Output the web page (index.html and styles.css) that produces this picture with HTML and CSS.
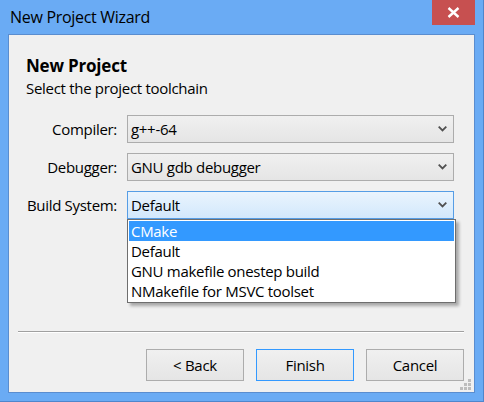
FILE: index.html
```html
<!DOCTYPE html>
<html>

<head>
    <title>New Project Wizard</title>
    <link rel="stylesheet" href="styles.css">
</head>

<body>
    <div class="window">
        <div class="titlebar">
            <span class="title">New Project Wizard</span>
            <div class="close">
                <svg width="13" height="11" viewBox="0 0 13 11">
                    <path d="M1.5 1 L11.5 10 M11.5 1 L1.5 10" stroke="#fff" stroke-width="2.4" fill="none"/>
                </svg>
            </div>
        </div>

        <div class="client">
            <div class="header">
                <h1>New Project</h1>
                <p>Select the project toolchain</p>
            </div>

            <div class="form">
                <label>Compiler:</label>
                <div class="combo">
                    <span>g++-64</span>
                    <svg class="arrow" width="9" height="6" viewBox="0 0 9 6"><path d="M0.7 0.7 L4.5 4.5 L8.3 0.7" stroke="#505050" stroke-width="1.8" fill="none"/></svg>
                </div>

                <label>Debugger:</label>
                <div class="combo">
                    <span>GNU gdb debugger</span>
                    <svg class="arrow" width="9" height="6" viewBox="0 0 9 6"><path d="M0.7 0.7 L4.5 4.5 L8.3 0.7" stroke="#505050" stroke-width="1.8" fill="none"/></svg>
                </div>

                <label>Build System:</label>
                <div class="combo focus">
                    <span>Default</span>
                    <svg class="arrow" width="9" height="6" viewBox="0 0 9 6"><path d="M0.7 0.7 L4.5 4.5 L8.3 0.7" stroke="#505050" stroke-width="1.8" fill="none"/></svg>
                    <ul class="droplist">
                        <li class="selected">CMake</li>
                        <li>Default</li>
                        <li>GNU makefile onestep build</li>
                        <li>NMakefile for MSVC toolset</li>
                    </ul>
                </div>
            </div>

            <div class="spacer"></div>

            <div class="separator"></div>

            <div class="buttons">
                <button>&lt; Back</button>
                <button class="default">Finish</button>
                <button>Cancel</button>
            </div>

            <svg class="grip" width="12" height="12" viewBox="0 0 12 12">
                <rect x="8" y="0" width="3" height="3" fill="#bdbdbd"/>
                <rect x="4" y="4" width="3" height="3" fill="#bdbdbd"/>
                <rect x="8" y="4" width="3" height="3" fill="#bdbdbd"/>
                <rect x="0" y="8" width="3" height="3" fill="#bdbdbd"/>
                <rect x="4" y="8" width="3" height="3" fill="#bdbdbd"/>
                <rect x="8" y="8" width="3" height="3" fill="#bdbdbd"/>
            </svg>
        </div>
    </div>
</body>

</html>
```
FILE: styles.css
```css
body {
    margin: 0;
    font-family: "Open Sans", "Noto Sans", sans-serif;
    background-color: #ffffff;
}

.window {
    width: 484px;
    height: 402px;
    box-sizing: border-box;
    padding: 0 8px 8px 8px;
    background-color: #6aabf4;
    border-right: 1px solid #4f86cc;
    border-bottom: 1px solid #4f86cc;
    display: flex;
    flex-direction: column;
}

.titlebar {
    height: 34px;
    display: flex;
    justify-content: space-between;
    align-items: flex-start;
    flex-shrink: 0;
}

.title {
    padding-left: 2px;
    margin-top: 6px;
    font-size: 16px;
    line-height: 22px;
    color: #000;
    letter-spacing: -0.3px;
}

.close {
    width: 43px;
    height: 25px;
    background-color: #c75050;
    display: flex;
    align-items: center;
    justify-content: center;
}

.client {
    position: relative;
    flex: 1;
    background-color: #f0f0f0;
    border: 1px solid #5a8dcf;
    display: flex;
    flex-direction: column;
    font-size: 15px;
    color: #000;
}

.header {
    padding: 21px 17px 0 17px;
}

.header h1 {
    margin: 0;
    font-size: 17px;
    font-weight: bold;
    line-height: 20px;
    letter-spacing: -0.2px;
}

.header p {
    margin: 2px 0 0 0;
    line-height: 20px;
    letter-spacing: -0.3px;
}

.form {
    margin-top: 17px;
    padding: 0 20px 0 17px;
    display: grid;
    grid-template-columns: 91px 1fr;
    column-gap: 10px;
    row-gap: 10px;
}

.form label {
    text-align: right;
    line-height: 28px;
    letter-spacing: -0.3px;
}

.combo {
    position: relative;
    height: 28px;
    box-sizing: border-box;
    border: 1px solid #acacac;
    background: linear-gradient(#f0f0f0, #e5e5e5);
    display: flex;
    align-items: center;
    padding-left: 3px;
    letter-spacing: -0.3px;
}

.combo.focus {
    border-color: #569de5;
    background: linear-gradient(#eaf4fd, #d2e8fc);
}

.arrow {
    margin-left: auto;
    margin-right: 6px;
}

.droplist {
    position: absolute;
    top: 27px;
    left: -1px;
    width: 329px;
    box-sizing: border-box;
    margin: 0;
    padding: 1px;
    list-style: none;
    background-color: #fff;
    border: 1px solid #6e6e6e;
    box-shadow: 3px 3px 3px rgba(0, 0, 0, 0.3);
    z-index: 2;
}

.droplist li {
    height: 20px;
    line-height: 20px;
    padding-left: 2px;
}

.droplist li.selected {
    background-color: #3399ff;
    color: #fff;
}

.spacer {
    flex: 1;
}

.separator {
    height: 1px;
    margin: 0 10px 0 9px;
    background-color: #a0a0a0;
    border-bottom: 1px solid #ffffff;
}

.buttons {
    margin-top: 16px;
    padding: 0 10px 11px 0;
    display: flex;
    justify-content: flex-end;
    gap: 12px;
}

button {
    width: 98px;
    height: 32px;
    border: 1px solid #acacac;
    background: linear-gradient(#f0f0f0, #e5e5e5);
    font-family: "Open Sans", "Noto Sans", sans-serif;
    font-size: 15px;
    color: #000;
    letter-spacing: -0.3px;
    padding: 0;
}

button.default {
    border-color: #3399ff;
}

.grip {
    position: absolute;
    right: 2px;
    bottom: 1px;
}
```
